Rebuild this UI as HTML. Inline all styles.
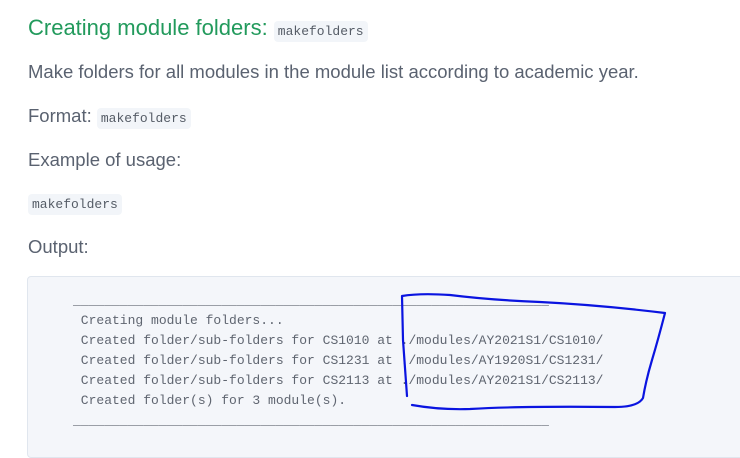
<!DOCTYPE html>
<html><head><meta charset="utf-8"><style>
body{margin:0;width:740px;height:443px;overflow:hidden;background:#fff;font-family:"Liberation Sans",sans-serif;color:#5a6270;position:relative}
.t{position:absolute;left:28px;white-space:nowrap}
code{font-family:"Liberation Mono",monospace;font-size:13px;background:#f2f5f9;border-radius:4px;padding:3px 4px;color:#555c66}
h2{margin:0;font-weight:normal;color:#229a5c;font-size:22px}
.p{font-size:18.5px}
.box{position:absolute;left:27px;top:276px;width:740px;height:180px;background:#f4f6fa;border:1px solid #e0e6ee;border-radius:4px}
pre{position:absolute;left:73px;top:291px;margin:0;font-family:"Liberation Mono",monospace;font-size:13px;line-height:20px;color:#5f6570}
</style></head><body>
<div class="t" style="top:15px"><h2>Creating module folders: <code style="font-size:13px">makefolders</code></h2></div>
<div class="t p" style="top:61px">Make folders for all modules in the module list according to academic year.</div>
<div class="t p" style="top:105px">Format: <code>makefolders</code></div>
<div class="t p" style="top:149px">Example of usage:</div>
<div class="t" style="top:195px"><code>makefolders</code></div>
<div class="t p" style="top:236px">Output:</div>
<div class="box"></div>
<pre>_____________________________________________________________
 Creating module folders...
 Created folder/sub-folders for CS1010 at ./modules/AY2021S1/CS1010/
 Created folder/sub-folders for CS1231 at ./modules/AY1920S1/CS1231/
 Created folder/sub-folders for CS2113 at ./modules/AY2021S1/CS2113/
 Created folder(s) for 3 module(s).</pre>
<pre style="top:411px">_____________________________________________________________</pre>
<svg style="position:absolute;left:0;top:0" width="740" height="443"><path d="M407 396 L403 340 L402 296 Q420 293 450 295 Q490 300 540 302 Q600 305 665 313 Q658 340 652 360 Q646 380 643 398 Q638 407 615 407 Q520 406 470 409 Q440 410 412 405" fill="none" stroke="#0a14e0" stroke-width="2.2" stroke-linecap="round" stroke-linejoin="round"/></svg>
</body></html>
